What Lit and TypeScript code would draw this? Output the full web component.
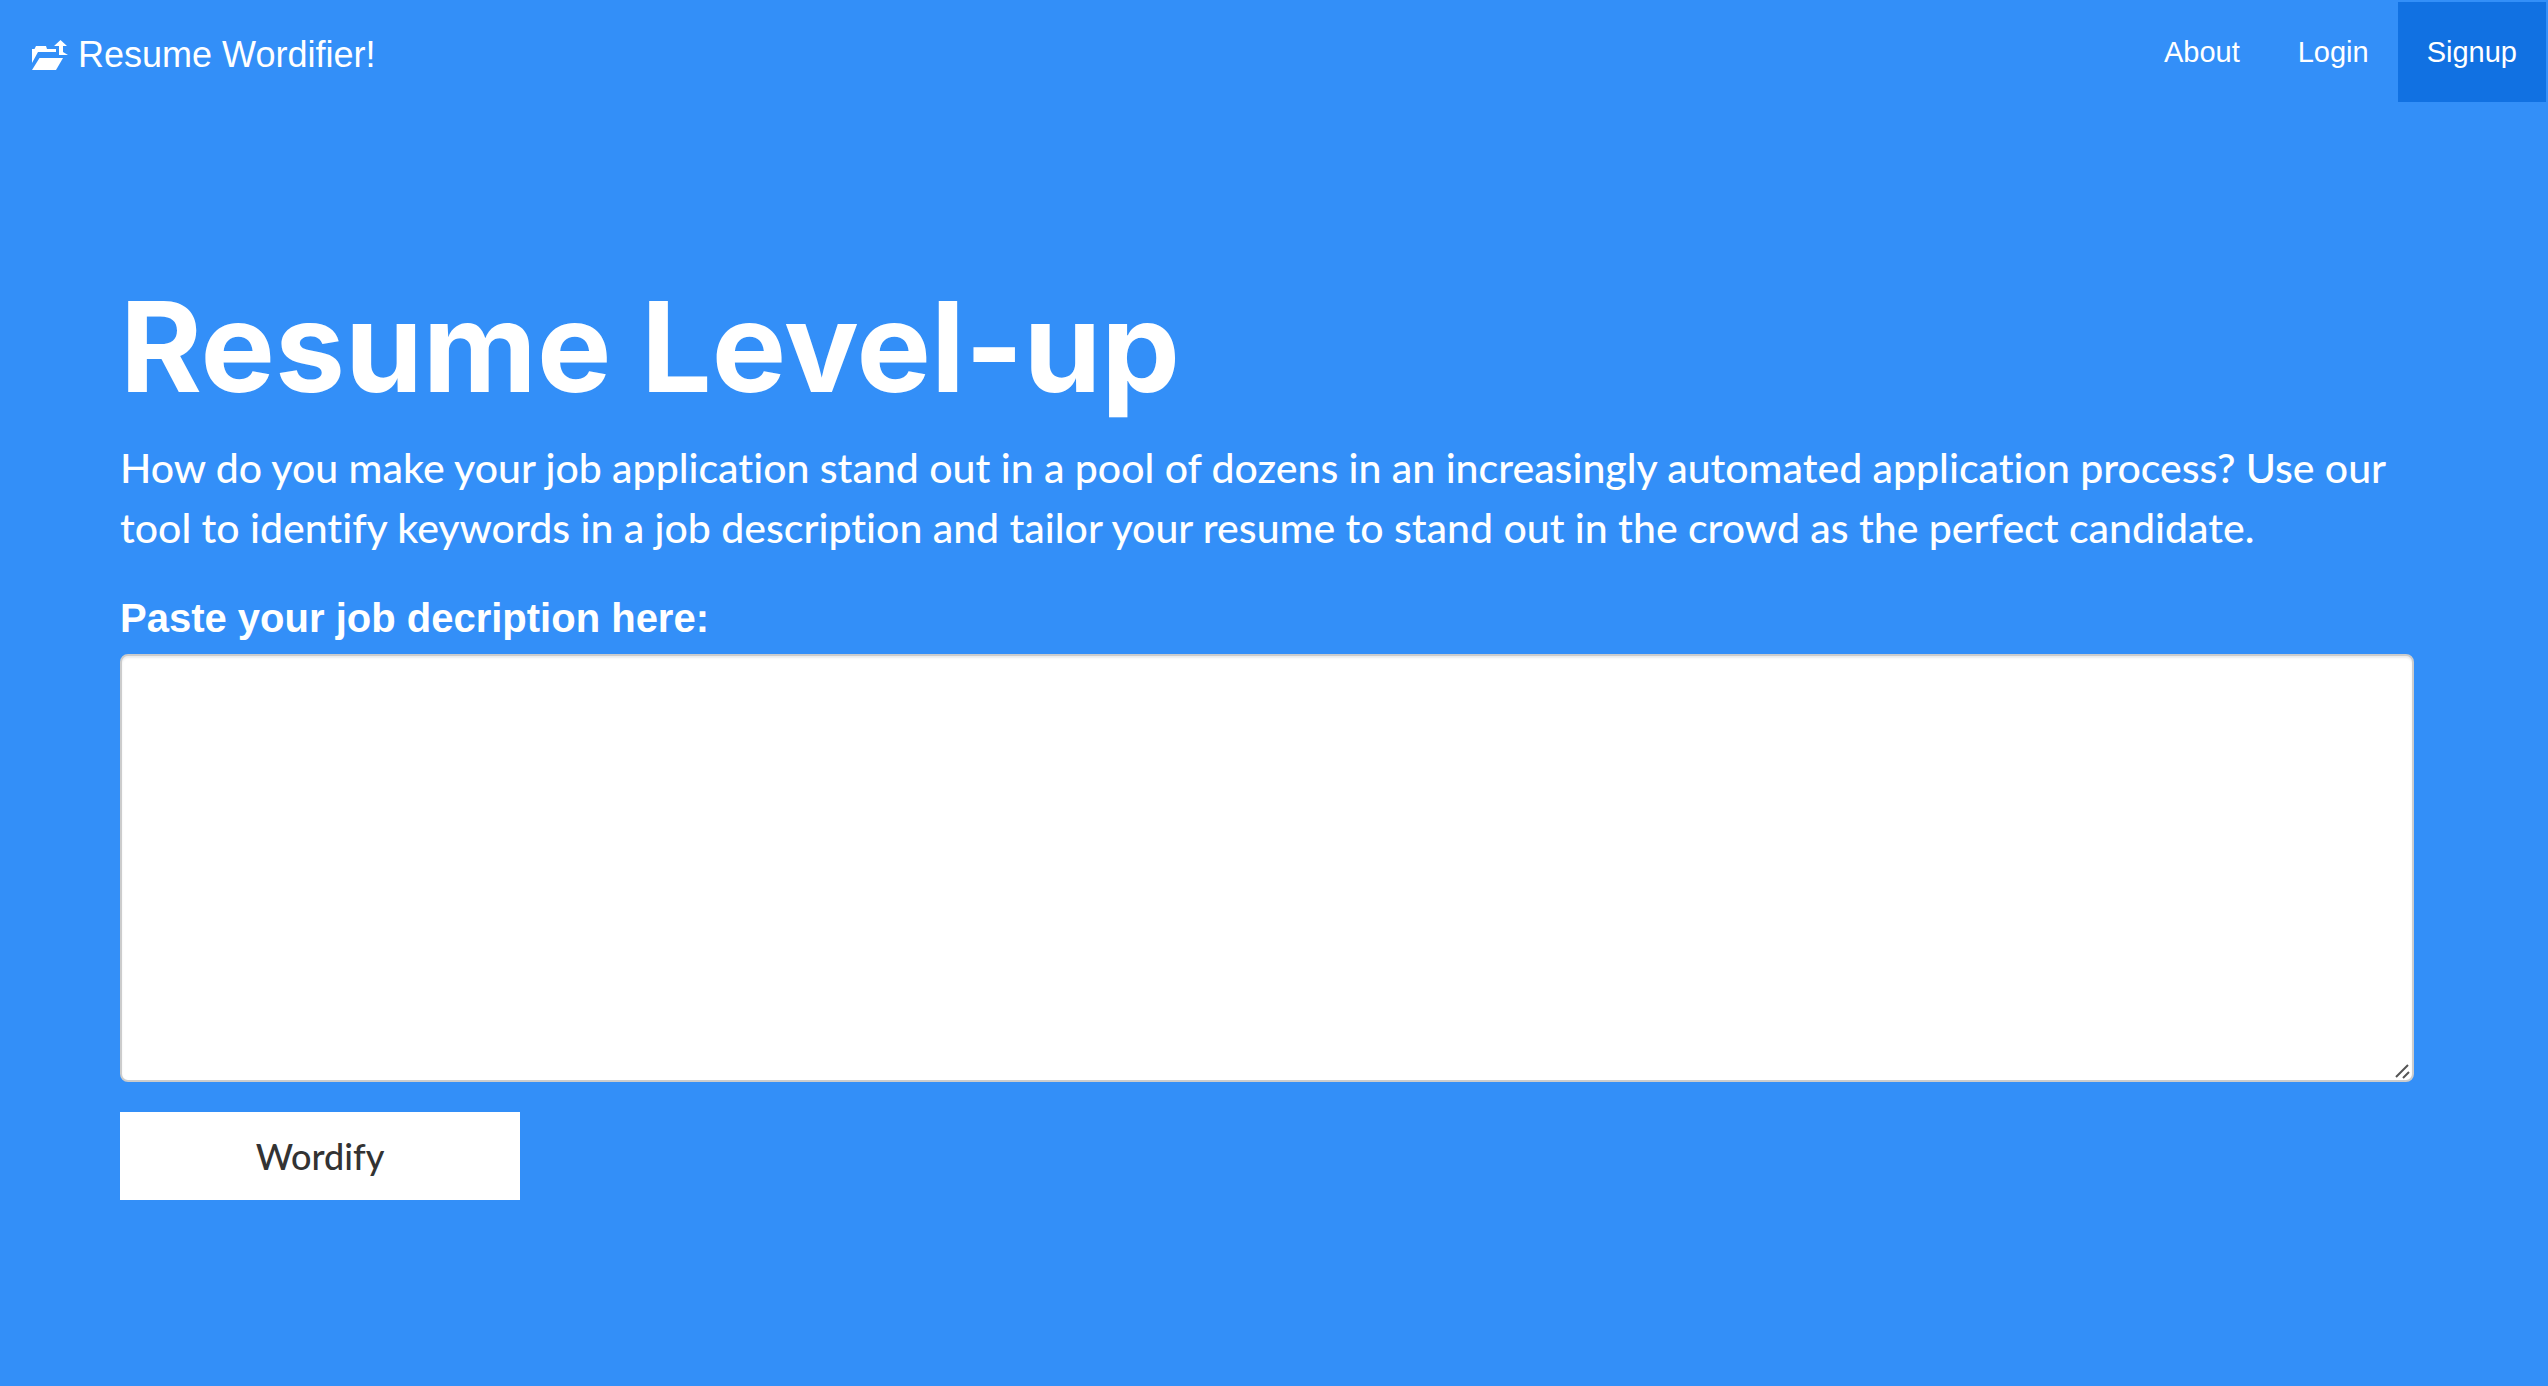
import { LitElement, html, css } from "lit";
import { customElement } from "lit/decorators.js";

@customElement("app-root")
class AppRoot extends LitElement {
  static styles = css`
    :host {
      display: block;
      min-height: 100vh;
      background: #338ff8;
      color: #fff;
      font-family: "Liberation Sans", Arial, sans-serif;
    }
    * { box-sizing: border-box; }
    .bar {
      display: flex;
      justify-content: space-between;
      align-items: flex-start;
      padding: 2px;
    }
    a { color: inherit; text-decoration: none; }
    .brand {
      display: flex;
      align-items: center;
      gap: 8px;
      padding: 33px 30px;
      font-size: 36px;
      line-height: 40px;
    }
    .logo { width: 38px; height: 36px; }
    .links { display: flex; margin: 0; padding: 0; list-style: none; }
    .link {
      display: block;
      padding: 30px 29px;
      font-size: 29px;
      line-height: 40px;
    }
    .active { background: #1171e2; }
    .hero { padding: 168px 134px 0 120px; }
    .title {
      margin: 0;
      font: 700 125px/138px Inter, sans-serif;
    }
    .lead {
      margin: 22px 0 32px;
      font: 500 41px/60px Lato, sans-serif;
      font-variant-ligatures: none;
    }
    .form { display: flex; flex-direction: column; align-items: flex-start; }
    .label { font-size: 40px; line-height: 56px; font-weight: 700; }
    .field { position: relative; width: 100%; margin: 8px 0 30px; }
    .text {
      display: block;
      width: 100%;
      height: 428px;
      padding: 12px 24px;
      border: 2px solid #ccc;
      border-radius: 8px;
      box-shadow: inset 0 2px 2px rgba(0, 0, 0, 0.075);
      background: #fff;
      color: #555;
      font: 28px/40px "Liberation Sans", Arial, sans-serif;
      resize: none;
      outline: none;
    }
    .grip {
      position: absolute;
      right: 2px;
      bottom: 2px;
      width: 18px;
      height: 18px;
      pointer-events: none;
    }
    .submit {
      width: 400px;
      height: 88px;
      border: 0;
      background: #fff;
      color: #333;
      font: 500 36px/40px Lato, sans-serif;
      font-variant-ligatures: none;
    }
  `;

  render() {
    return html`
      <header class="bar">
        <a class="brand" href="#">
          <svg class="logo" viewBox="0 0 38 36" fill="#fff" aria-hidden="true">
            <path d="M0 12h2.500l1.500-3h10l1 3h9v3H6L0 26z" />
            <path d="M7.500 21H31l-7 12H0z" />
            <path d="M28.500 3l6.500 6h-4v6l5 3h-9V9h-5z" />
          </svg>
          <span>Resume Wordifier!</span>
        </a>
        <nav>
          <ul class="links">
            <li><a class="link" href="#about">About</a></li>
            <li><a class="link" href="#login">Login</a></li>
            <li><a class="link active" href="#signup">Signup</a></li>
          </ul>
        </nav>
      </header>
      <main class="hero">
        <h1 class="title">Resume Level-up</h1>
        <p class="lead">
          How do you make your job application stand out in a pool of dozens in an increasingly
          automated application process? Use our tool to identify keywords in a job description and
          tailor your resume to stand out in the crowd as the perfect candidate.
        </p>
        <form class="form">
          <label class="label" for="job">Paste your job decription here:</label>
          <div class="field">
            <textarea class="text" id="job"></textarea>
            <svg class="grip" viewBox="0 0 18 18" stroke="#555" stroke-width="2" aria-hidden="true">
              <path d="M2 15L14 3M9 16L15 10" />
            </svg>
          </div>
          <button class="submit" type="button">Wordify</button>
        </form>
      </main>
    `;
  }
}
